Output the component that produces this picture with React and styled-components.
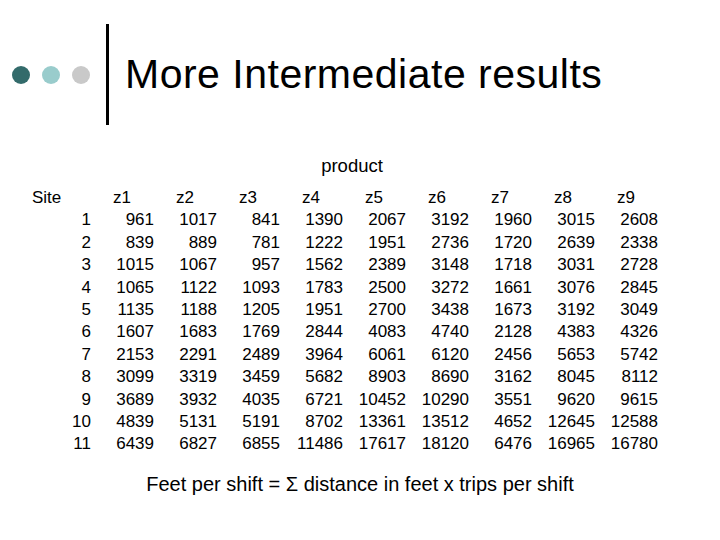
import styled, { createGlobalStyle } from 'styled-components'

const GlobalStyle = createGlobalStyle`
  body {
    margin: 0;
    background: #ffffff;
    font-family: "Liberation Sans", Arial, sans-serif;
    color: #000000;
  }
`

const Slide = styled.div`
  width: 720px;
  height: 540px;
  box-sizing: border-box;
  padding-top: 24px;
  display: flex;
  flex-direction: column;
  overflow: hidden;
`

const Header = styled.div`
  display: flex;
  align-items: flex-start;
  height: 101px;
`

const Dots = styled.div`
  display: flex;
  align-self: center;
  gap: 12px;
  margin-left: 12px;
`

const Dot = styled.span`
  width: 18px;
  height: 18px;
  border-radius: 50%;
  background: ${(p) => p.color};
`

const Divider = styled.div`
  width: 3px;
  height: 101px;
  background: #000000;
  margin-left: 16px;
`

const Title = styled.h1`
  margin: 30px 0 0 16px;
  font-size: 41px;
  font-weight: normal;
  line-height: 40px;
  letter-spacing: 0.5px;
  white-space: nowrap;
`

const Product = styled.div`
  margin-top: 30px;
  height: 22px;
  line-height: 22px;
  font-size: 18.5px;
  text-align: center;
  width: 704px;
`

const Table = styled.div`
  margin-top: 10px;
  margin-left: 32px;
  display: grid;
  grid-template-columns: 30px 29px repeat(9, 63px);
  grid-auto-rows: 22.4px;
  font-size: 17px;
  line-height: 22.4px;
`

const Cell = styled.div`
  text-align: ${(p) => (p.head ? 'left' : 'right')};
  padding-left: ${(p) => (p.head ? '22px' : '0')};
  white-space: nowrap;
`

const SiteLabel = styled.div`
  text-align: left;
`

const Footer = styled.div`
  margin-top: 16px;
  font-size: 20px;
  line-height: 24px;
  text-align: center;
`

const rows = [
  [961, 1017, 841, 1390, 2067, 3192, 1960, 3015, 2608],
  [839, 889, 781, 1222, 1951, 2736, 1720, 2639, 2338],
  [1015, 1067, 957, 1562, 2389, 3148, 1718, 3031, 2728],
  [1065, 1122, 1093, 1783, 2500, 3272, 1661, 3076, 2845],
  [1135, 1188, 1205, 1951, 2700, 3438, 1673, 3192, 3049],
  [1607, 1683, 1769, 2844, 4083, 4740, 2128, 4383, 4326],
  [2153, 2291, 2489, 3964, 6061, 6120, 2456, 5653, 5742],
  [3099, 3319, 3459, 5682, 8903, 8690, 3162, 8045, 8112],
  [3689, 3932, 4035, 6721, 10452, 10290, 3551, 9620, 9615],
  [4839, 5131, 5191, 8702, 13361, 13512, 4652, 12645, 12588],
  [6439, 6827, 6855, 11486, 17617, 18120, 6476, 16965, 16780],
]

const zones = ['z1', 'z2', 'z3', 'z4', 'z5', 'z6', 'z7', 'z8', 'z9']

export default function App() {
  return (
    <Slide>
      <GlobalStyle />
      <Header>
        <Dots>
          <Dot color="#336b6b" />
          <Dot color="#99cccc" />
          <Dot color="#c9c9c9" />
        </Dots>
        <Divider />
        <Title>More Intermediate results</Title>
      </Header>
      <Product>product</Product>
      <Table>
        <SiteLabel>Site</SiteLabel>
        <Cell />
        {zones.map((z) => (
          <Cell head key={z}>
            {z}
          </Cell>
        ))}
        {rows.map((r, i) => [
          <Cell key={'e' + i} />,
          <Cell key={'s' + i}>{i + 1}</Cell>,
          ...r.map((v, j) => <Cell key={i + '-' + j}>{v}</Cell>),
        ])}
      </Table>
      <Footer>Feet per shift = Σ distance in feet x trips per shift</Footer>
    </Slide>
  )
}
